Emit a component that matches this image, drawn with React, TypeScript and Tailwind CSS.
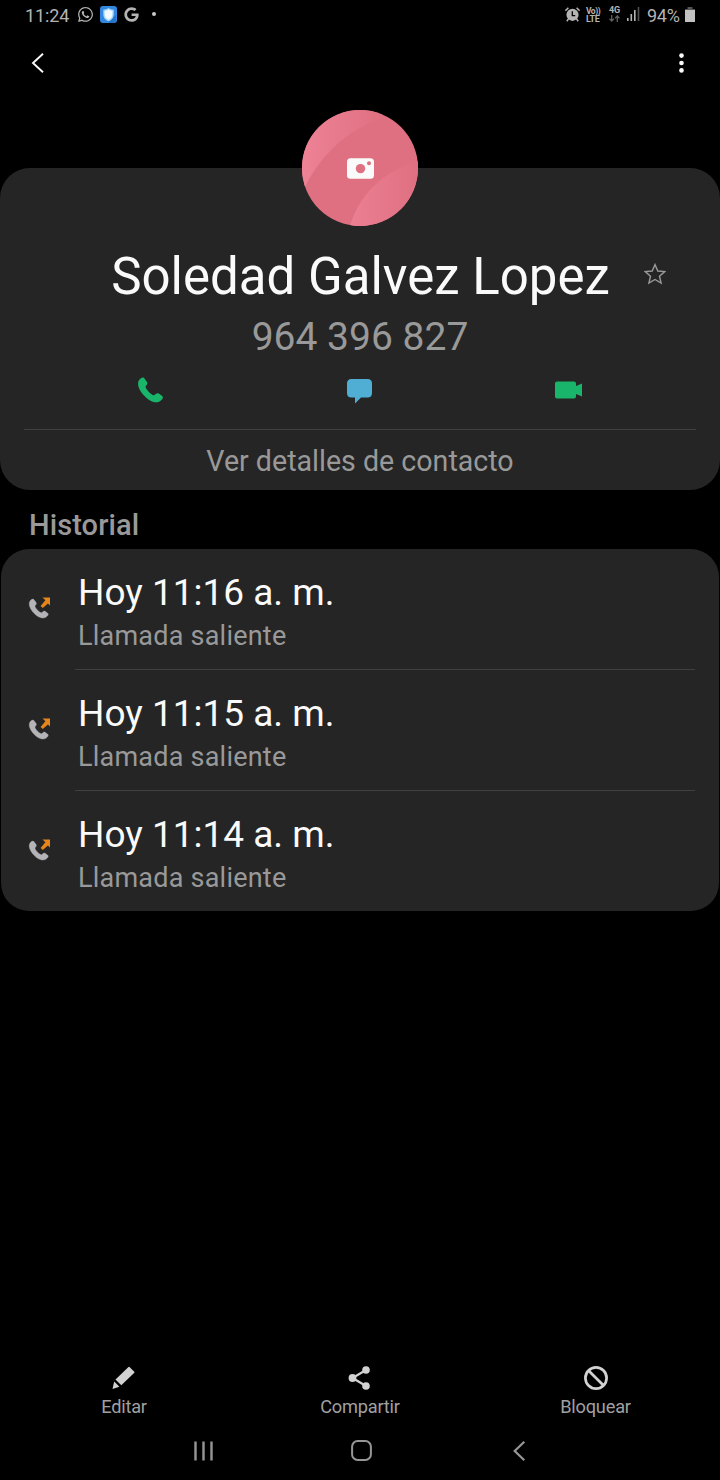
import React from "react";
import { FaGoogle, FaWhatsapp } from "react-icons/fa";

const CALLS = [
  { id: 1, time: "Hoy 11:16 a. m.", type: "Llamada saliente" },
  { id: 2, time: "Hoy 11:15 a. m.", type: "Llamada saliente" },
  { id: 3, time: "Hoy 11:14 a. m.", type: "Llamada saliente" },
];

const PHONE_PATH =
  "M1.2 2.8C2.8 .6 4.8-.4 6.2.8L9 4.6C9.9 5.9 9.6 6.9 8.8 7.8C7.5 9.2 7.5 10.2 8.5 11.7C10.3 14.4 12.1 16.2 14.6 17.8C16 18.7 17 18.4 18.1 17.2C19 16.2 20 16 21.2 16.6L24.4 18.8C25.8 19.9 25.6 21.3 24.4 22.6C22 25.4 18.9 26 15.8 25.2C9 23.3 1.4 14.9.2 8.5C-.1 6.2.1 4.2 1.2 2.8Z";

const StatusBar: React.FC = () => (
  <div className="flex items-center justify-between h-[30px] pl-[25px] pr-[25px] text-[#b4b4b4]">
    <div className="flex items-center">
      <span className="w-[52px] text-[18px] leading-[30px] pt-[2px] tracking-[-0.1px] whitespace-nowrap">
        11:24
      </span>
      <FaWhatsapp className="w-[17px] h-[17px] -mt-[2px]" />
      <svg className="w-[17px] h-[17px] ml-[6px] -mt-[2px]" viewBox="0 0 17 17">
        <rect width="17" height="17" rx="3" fill="#3288df" />
        <path d="M9 15.5 16 9V15L14 17H9Z" fill="#2375cc" />
        <path
          d="M8.5 2C10.2 3.3 11.6 3.7 13.7 3.7V8.4C13.7 11.7 11.6 13.9 8.5 15.3C5.4 13.9 3.3 11.7 3.3 8.4V3.7C5.4 3.7 6.8 3.3 8.5 2Z"
          fill="#a9d7fb"
        />
        <path
          d="M8.5 3.6C9.8 4.5 10.8 4.9 12.3 4.9V8.4C12.3 10.9 10.7 12.6 8.5 13.7C6.3 12.6 4.7 10.9 4.7 8.4V4.9C6.2 4.9 7.2 4.5 8.5 3.6Z"
          fill="#f1faff"
        />
      </svg>
      <FaGoogle className="w-[15px] h-[15px] ml-[7px] -mt-[1px]" />
      <span className="w-[4px] h-[4px] ml-[13px] -mt-[2px] rounded-full bg-[#c8c8c8]" />
    </div>

    <div className="flex items-center">
      {/* Alarm */}
      <svg className="w-[15px] h-[15px] -mt-px" viewBox="0 0 15 15">
        <circle cx="7.5" cy="7.8" r="6.1" fill="currentColor" />
        <path
          d="M.4 3.6 3.4.8M14.6 3.6 11.6.8M3.6 11.8 1.8 14.2M11.4 11.8 13.2 14.2"
          stroke="currentColor"
          strokeWidth="1.5"
        />
        <path d="M7.3 4.2V8.6H10.2" fill="none" stroke="#000" strokeWidth="1.3" />
      </svg>
      <div className="flex flex-col w-[16px] ml-[6px] -mt-px text-[9px] font-bold leading-[8px] whitespace-nowrap">
        <span className="text-[8.5px] tracking-[-0.5px]">Vo))</span>
        <span className="tracking-[-0.3px]">LTE</span>
      </div>
      <div className="flex flex-col items-center w-[13px] ml-[6px] -mt-[2px]">
        <span className="text-[9px] font-bold leading-[8px] tracking-[-0.2px]">4G</span>
        <svg className="w-[11px] h-[7px] mt-px" viewBox="0 0 11 7">
          <path
            d="M2.7 0V6M.5 3.8 2.7 6 4.9 3.8M8.3 7V1M6.1 3.2 8.3 1 10.5 3.2"
            fill="none"
            stroke="#606060"
            strokeWidth="1.3"
          />
        </svg>
      </div>
      <svg className="w-[13px] h-[14px] ml-[6px] -mt-[2px]" viewBox="0 0 13 14">
        <path d="M0 11H1.6V14H0ZM3.5 7H5.1V14H3.5ZM7 3H8.6V14H7Z" fill="currentColor" />
        <path d="M10.7 0H12.3V14H10.7Z" fill="#505050" />
      </svg>
      <span className="w-[38px] ml-[7px] text-[18px] leading-[30px] pt-[2px] tracking-[-0.3px]">
        94%
      </span>
      <svg className="w-[10px] h-[15px] -mt-px" viewBox="0 0 10 15">
        <path d="M2.5 0H7.5V2H10V3H0V2H2.5Z" fill="#555" />
        <path d="M0 3H10V14.5Q10 15 9.5 15H.5Q0 15 0 14.5Z" fill="#c2c2c2" />
      </svg>
    </div>
  </div>
);

const Toolbar: React.FC = () => (
  <div className="flex items-center justify-between h-[65px] pl-[31px] pr-[35px]">
    <svg className="w-[14px] h-[20px]" viewBox="0 0 14 20">
      <path d="M12 .8 2 10 12 19.2" fill="none" stroke="#fafafa" strokeWidth="1.9" />
    </svg>
    <svg className="w-[7px] h-[20px]" viewBox="0 0 7 20" fill="#fafafa">
      <circle cx="3.5" cy="2.6" r="2.3" />
      <circle cx="3.5" cy="10" r="2.3" />
      <circle cx="3.5" cy="17.4" r="2.3" />
    </svg>
  </div>
);

const Avatar: React.FC = () => (
  <svg className="w-[116px] h-[116px] shrink-0 mx-auto -mt-[58px]" viewBox="0 0 116 116">
    <defs>
      <linearGradient id="top" x1="0" x2="1">
        <stop offset="0" stopColor="#ee8296" />
        <stop offset="1" stopColor="#de7081" />
      </linearGradient>
      <linearGradient id="bottom" x1="0" x2="1">
        <stop offset="0" stopColor="#ec7f93" />
        <stop offset="1" stopColor="#de7081" />
      </linearGradient>
      <clipPath id="round">
        <circle cx="58" cy="58" r="58" />
      </clipPath>
    </defs>
    <g clipPath="url(#round)">
      <rect width="116" height="116" fill="#de7081" />
      <path d="M0 0H80V8C46 20 20 43 3 77H0Z" fill="url(#top)" />
      <path d="M48 116C56 88 78 62 116 51V116Z" fill="url(#bottom)" />
    </g>
    <rect x="45" y="48.3" width="27" height="20.5" rx="3.6" fill="#fafafa" />
    <circle cx="58.5" cy="58.6" r="4.7" fill="#de7081" />
    <circle cx="67" cy="53.2" r="2" fill="#de7081" />
  </svg>
);

const ContactCard: React.FC = () => (
  <div className="flex flex-col h-[322px] mt-[73px] rounded-[30px] bg-[#252525]">
    <Avatar />
    <div className="grid grid-cols-[109px_503px_108px] items-center h-[64px] mt-[19px] shrink-0">
      <h1 className="col-start-2 text-[51px] leading-[64px] text-center text-[#fafafa] whitespace-nowrap">
        Soledad Galvez Lopez
      </h1>
      <svg className="w-[22px] h-[22px] ml-[32px] -mt-[6px]" viewBox="0 0 22 22">
        <path
          d="M11 1.6 13.8 8 20.7 8.6 15.5 13.2 17.1 20 11 16.5 4.9 20 6.5 13.2 1.3 8.6 8.2 8Z"
          fill="none"
          stroke="#999"
          strokeWidth="1.4"
        />
      </svg>
    </div>
    <p className="h-[50px] mt-[3px] shrink-0 text-[39px] leading-[50px] text-center text-[#999]">
      964 396 827
    </p>
    <div className="flex justify-between items-center h-[28px] mt-[14px] shrink-0 px-[138px]">
      <svg className="w-[25px] h-[26px]" viewBox="0 0 25.5 26">
        <path d={PHONE_PATH} fill="#19b56b" />
      </svg>
      <svg className="w-[25px] h-[25px] mt-[3px]" viewBox="0 0 25 25">
        <path
          d="M4.5 0H20.5Q25 0 25 4.5V14Q25 18.5 20.5 18.5H14L8 24.5V18.5H4.5Q0 18.5 0 14V4.5Q0 0 4.5 0Z"
          fill="#50aed5"
        />
      </svg>
      <svg className="w-[27px] h-[18px] -mt-px" viewBox="0 0 27 18">
        <path
          d="M2 .5H19Q21 .5 21 2.5V5L27 2.5V15.5L21 13V15.5Q21 17.5 19 17.5H2Q0 17.5 0 15.5V2.5Q0 .5 2 .5Z"
          fill="#19b56b"
        />
      </svg>
    </div>
    <div className="mx-6 mt-[25px] pt-px border-t border-[#404040] text-center text-[28.6px] leading-[60px] text-[#999]">
      Ver detalles de contacto
    </div>
  </div>
);

const CallRow: React.FC<{ time: string; type: string }> = ({ time, type }) => (
  <div className="flex h-[121px] pr-[24px] group">
    <svg className="w-[22px] h-[22px] mt-[48px] ml-[27px] shrink-0" viewBox="0 0 22 22">
      <g transform="translate(1.2 1.9) scale(.75)">
        <path d={PHONE_PATH} fill="#b4b4b8" stroke="#b4b4b8" strokeWidth=".5" />
      </g>
      <path d="M14.5 .5H22V8.5L19.9 6.4 14.8 11 12.6 8.9 17.4 3.2Z" fill="#e5851b" />
    </svg>
    <div className="flex-1 ml-[25px] pl-[3px] border-b border-[#404040] group-last:border-0">
      <p className="mt-[21px] text-[37px] leading-[46px] text-[#fafafa]">{time}</p>
      <p className="mt-[2px] text-[27px] leading-[36px] tracking-[0.22px] text-[#999]">{type}</p>
    </div>
  </div>
);

const BottomActions: React.FC = () => (
  <div className="grid grid-cols-3 h-[66px] px-[6px] text-[18.2px] tracking-[-0.2px] leading-[24px] text-[#a0a0a0]">
    <div className="flex flex-col items-center">
      <svg className="w-[24px] h-[24px] mt-[11px]" viewBox="0 0 24 24" fill="#d2d2d2">
        <path d="M16.5 1Q17 .7 17.5 1L22.3 5.8Q22.7 6.3 22.3 6.8L9.3 19.3 3.5 13.4Z" />
        <path d="M2.2 15.6 7.4 20.8.5 23Z" />
      </svg>
      <span className="mt-[5px]">Editar</span>
    </div>
    <div className="flex flex-col items-center">
      <svg className="w-[24px] h-[24px] mt-[11px]" viewBox="0 0 24 24" fill="#d2d2d2">
        <path d="M18 4 4.5 12 18 20" fill="none" stroke="#d2d2d2" strokeWidth="2.2" />
        <circle cx="18" cy="4" r="3.8" />
        <circle cx="4.5" cy="12" r="3.9" />
        <circle cx="18" cy="20" r="3.8" />
      </svg>
      <span className="mt-[5px]">Compartir</span>
    </div>
    <div className="flex flex-col items-center pr-px">
      <svg className="w-[24px] h-[24px] mt-[11px]" viewBox="0 0 24 24">
        <circle cx="12" cy="12" r="10.6" fill="none" stroke="#d2d2d2" strokeWidth="2.7" />
        <path d="M4.7 4.7 19.3 19.3" stroke="#d2d2d2" strokeWidth="2.7" />
      </svg>
      <span className="mt-[5px]">Bloquear</span>
    </div>
  </div>
);

const NavBar: React.FC = () => (
  <div className="flex items-center h-[59px] pl-[194px]">
    <svg className="w-[19px] h-[20px]" viewBox="0 0 19 20">
      <path d="M1.5 .5V19.5M9.5 .5V19.5M17.5 .5V19.5" stroke="#969696" strokeWidth="2.4" />
    </svg>
    <svg className="w-[21px] h-[21px] ml-[138px]" viewBox="0 0 21 21">
      <rect
        x="1.1"
        y="1.1"
        width="18.8"
        height="18.8"
        rx="5.5"
        fill="none"
        stroke="#969696"
        strokeWidth="2"
      />
    </svg>
    <svg className="w-[13px] h-[20px] ml-[141px]" viewBox="0 0 13 20">
      <path d="M11.3 .8 1.7 10 11.3 19.2" fill="none" stroke="#969696" strokeWidth="2.2" />
    </svg>
  </div>
);

const App: React.FC = () => {
  return (
    <div className="flex flex-col w-[720px] h-[1480px] overflow-hidden bg-black font-[Roboto,sans-serif]">
      <StatusBar />
      <Toolbar />
      <ContactCard />
      <h2 className="h-[59px] pl-[29px] pt-[6px] text-[29px] font-medium leading-[59px] tracking-[0.1px] text-[#999]">
        Historial
      </h2>
      <div className="h-[362px] mx-px rounded-[28px] bg-[#252525]">
        {CALLS.map((call) => (
          <CallRow key={call.id} time={call.time} type={call.type} />
        ))}
      </div>
      <div className="mt-auto">
        <BottomActions />
        <NavBar />
      </div>
    </div>
  );
};

export default App;
